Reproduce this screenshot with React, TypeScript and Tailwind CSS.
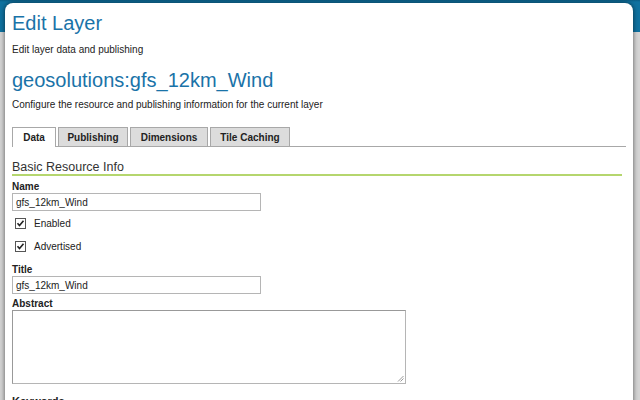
import React from "react";

function Checkbox() {
  return (
    <span className="inline-flex h-[11px] w-[11px] items-center justify-center border border-[#555] bg-white">
      <svg width="9" height="9" viewBox="0 0 9 9">
        <path d="M1.5 4.2 L3.5 6.5 L7.5 1.8" fill="none" stroke="#222" strokeWidth="1.6" />
      </svg>
    </span>
  );
}

export default function App() {
  return (
    <div className="h-[400px] w-[640px] overflow-hidden bg-[linear-gradient(to_bottom,#0a5d85_0px,#0f72a0_2px,#0f72a0_32px,#d4d4d4_32px,#d4d4d4_100%)] pl-[5px] pr-[7px] pt-[3px] font-['Liberation_Sans',sans-serif] text-[#222]">
      <div className="h-[420px] rounded-t-[8px] bg-white pl-[7px] pr-[7px] pt-[6px] shadow-[0_0_5px_rgba(0,0,0,0.6)]">
        <h1 className="text-[20px] leading-[28px] text-[#1a73a8]">Edit Layer</h1>
        <p className="mt-[6px] text-[10px] leading-[14px]">Edit layer data and publishing</p>
        <h2 className="mt-[9px] text-[20px] leading-[28px] text-[#1a73a8]">geosolutions:gfs_12km_Wind</h2>
        <p className="mt-[4px] text-[10px] leading-[14px]">Configure the resource and publishing information for the current layer</p>

        <div className="mt-[15px] flex items-end border-b border-[#a8a8a8]">
          <div className="-mb-px flex h-[20px] w-[44px] items-center justify-center border border-b-0 border-[#a8a8a8] bg-white text-[10px] font-bold">Data</div>
          <div className="ml-[2px] flex h-[19px] w-[70px] items-center justify-center border border-b-0 border-[#a8a8a8] bg-[#dcdcdc] text-[10px] font-bold">Publishing</div>
          <div className="ml-[2px] flex h-[19px] w-[78px] items-center justify-center border border-b-0 border-[#a8a8a8] bg-[#dcdcdc] text-[10px] font-bold">Dimensions</div>
          <div className="ml-[2px] flex h-[19px] w-[80px] items-center justify-center border border-b-0 border-[#a8a8a8] bg-[#dcdcdc] text-[10px] font-bold">Tile Caching</div>
        </div>

        <div className="mr-[4px] mt-[13px] border-b-2 border-[#b5d66e] text-[12.5px] leading-[14px] text-[#333]">Basic Resource Info</div>

        <div className="mt-[4px] text-[10px] font-bold leading-[13px]">Name</div>
        <div className="flex h-[18px] w-[249px] items-center border border-[#b5b5b5] px-[3px] text-[10px]">gfs_12km_Wind</div>

        <div className="mt-[6px] flex items-center gap-[8px] pl-[3px] text-[10px] leading-[13px]">
          <Checkbox />
          <span>Enabled</span>
        </div>
        <div className="mt-[10px] flex items-center gap-[8px] pl-[3px] text-[10px] leading-[13px]">
          <Checkbox />
          <span>Advertised</span>
        </div>

        <div className="mt-[10px] text-[10px] font-bold leading-[13px]">Title</div>
        <div className="flex h-[18px] w-[249px] items-center border border-[#b5b5b5] px-[3px] text-[10px]">gfs_12km_Wind</div>

        <div className="mt-[3px] text-[10px] font-bold leading-[13px]">Abstract</div>
        <div className="relative h-[74px] w-[394px] border border-[#b5b5b5] border-l-[#999] border-t-[#999]">
          <svg className="absolute bottom-[1px] right-[1px]" width="7" height="7" viewBox="0 0 7 7">
            <path d="M6.5 1 L1 6.5 M6.5 3.5 L3.5 6.5" stroke="#999" strokeWidth="1" />
          </svg>
        </div>
        <div className="mt-[10px] text-[11px] font-bold leading-[14px]">Keywords</div>
      </div>
    </div>
  );
}
